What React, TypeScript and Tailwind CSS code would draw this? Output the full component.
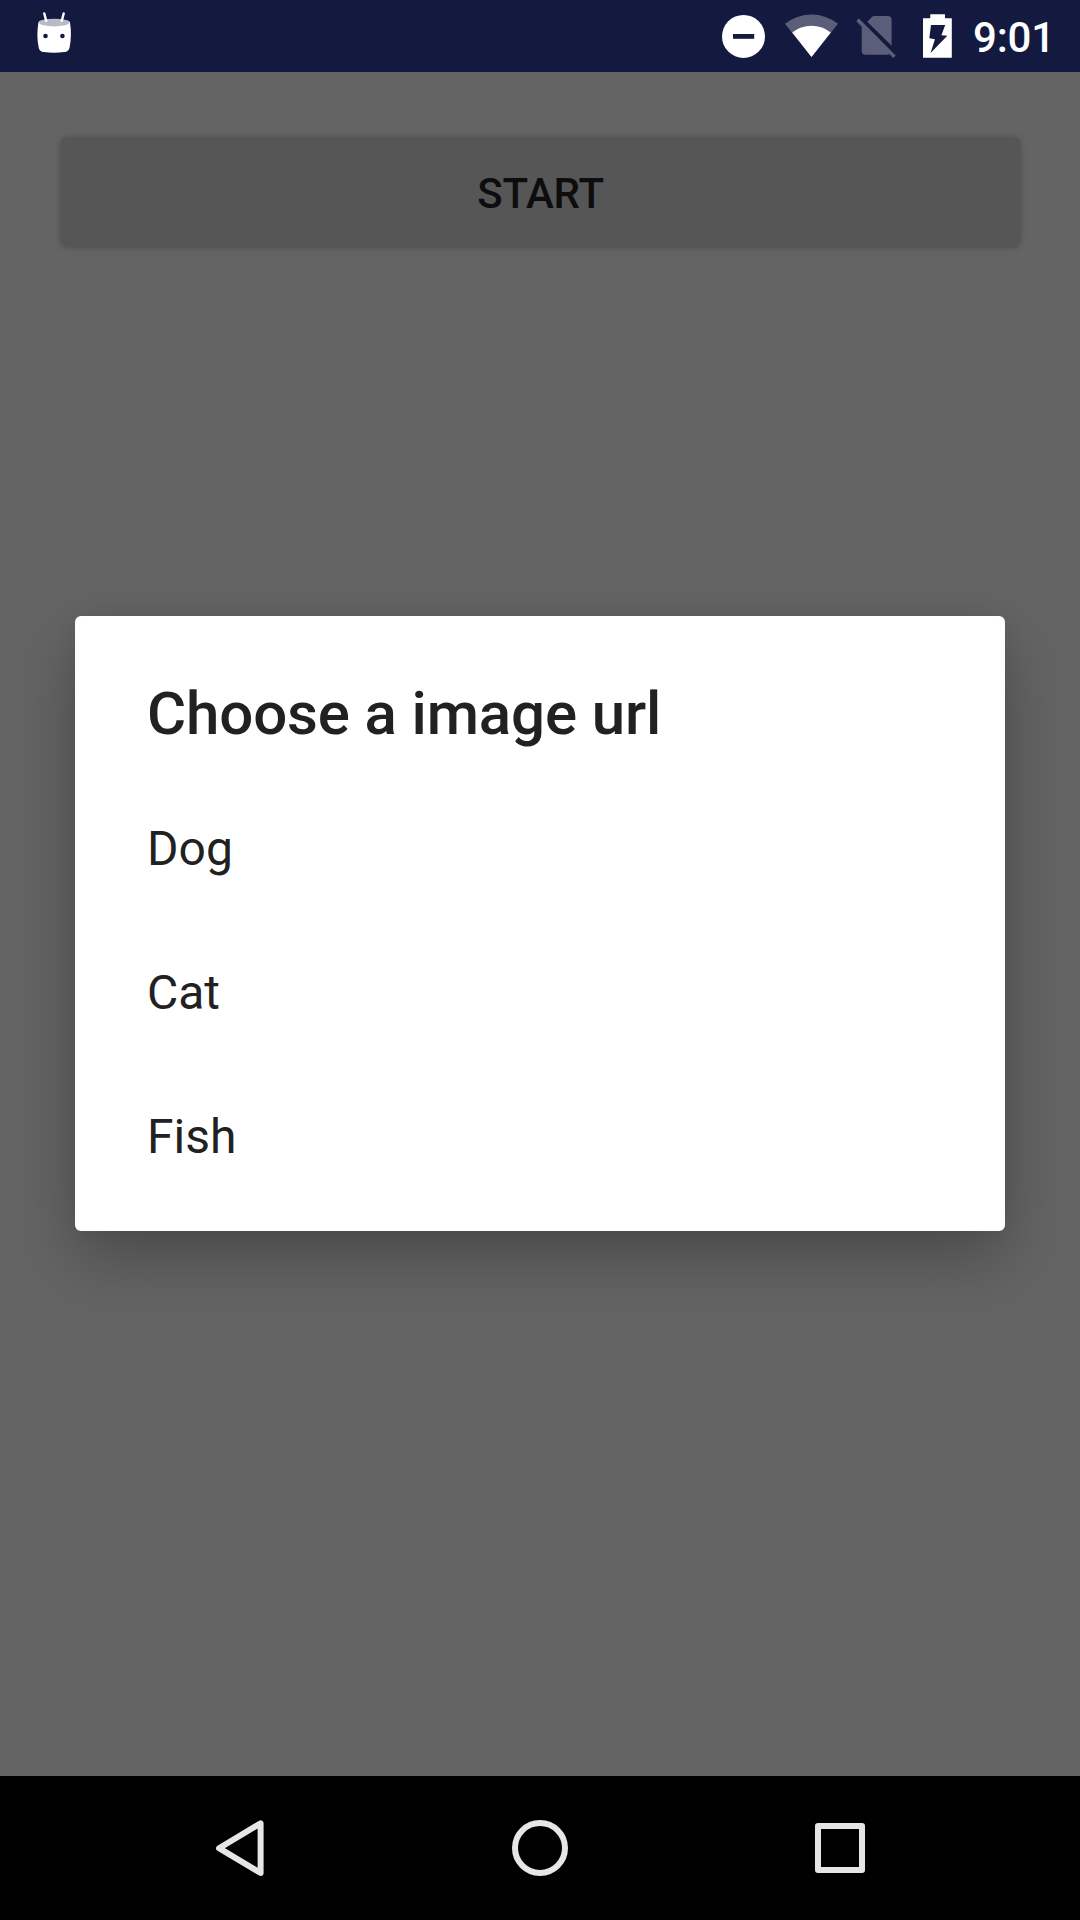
import React from "react";

const options = ["Dog", "Cat", "Fish"];

function DebugIcon() {
  return (
    <svg className="ml-[20px] h-[72px] w-[68px]" viewBox="20 0 68 72">
      <path
        d="M38.4 22.6C38.4 17.8 70 17.8 70 22.6C71.4 31 71.2 40 69.6 47.5C68.8 50.8 67.3 51.6 64 52.1C58 52.9 50 52.9 44 52.1C41 51.6 39.4 50.8 38.7 47.5C37 40 37 31 38.4 22.6Z"
        fill="#fff"
      />
      <ellipse cx="54.1" cy="22.6" rx="15.1" ry="3.9" fill="#b9bac6" />
      <path d="M44.3 13.5L46.2 20.8M63.7 13.5L61.8 20.8" stroke="#fff" strokeWidth="2.4" strokeLinecap="round" />
      <circle cx="45.5" cy="36" r="2.3" fill="#141940" />
      <circle cx="62.4" cy="36" r="2.3" fill="#141940" />
    </svg>
  );
}

function DoNotDisturbIcon() {
  return (
    <svg className="h-[72px] w-[48px]" viewBox="720 0 48 72">
      <circle cx="743.5" cy="36.4" r="21.5" fill="#fff" />
      <rect x="733" y="34" width="21.2" height="4.8" fill="#141940" />
    </svg>
  );
}

function WifiIcon() {
  return (
    <svg className="h-[72px] w-[72px]" viewBox="776 0 72 72">
      <path d="M785 23.7A43 43 0 0 1 838 23.7L811.5 57Z" fill="#fff" fillOpacity=".3" />
      <path d="M792.2 32.4A31.5 31.5 0 0 1 830.8 32.4L811.5 57Z" fill="#fff" />
    </svg>
  );
}

function NoSimIcon() {
  return (
    <svg className="h-[72px] w-[56px]" viewBox="848 0 56 72">
      <g fill="#fff" fillOpacity=".3">
        <path d="M867.3 21.7L872.2 16.8Q873 16 874 16H887.6Q891.6 16 891.6 20V45.8Z" />
        <path d="M858.9 18.4L895.7 55.4L893.2 58L889.3 54.1Q888.5 54.7 887.6 54.7H865.7Q861.7 54.7 861.7 50.7V26.7L856.3 21.1Z" />
      </g>
    </svg>
  );
}

function BatteryIcon() {
  return (
    <svg className="h-[72px] w-[48px]" viewBox="912 0 48 72">
      <path
        d="M930.3 14.3H945V18.2H951.8V57.8H923V18.2H930.3ZM931 25L929.3 38.3L934.9 39.2L930.6 53L947.3 35.8L941.4 35.2L945.2 25Z"
        fill="#fff"
        fillRule="evenodd"
      />
    </svg>
  );
}

function StatusBar() {
  return (
    <header className="flex h-[72px] shrink-0 items-center justify-between bg-[#141940]">
      <DebugIcon />
      <div className="flex items-center pr-[29px]">
        <DoNotDisturbIcon />
        <div className="w-2" />
        <WifiIcon />
        <NoSimIcon />
        <div className="w-2" />
        <BatteryIcon />
        <span className="w-[91px] pt-[2px] pl-[13px] text-[42px] leading-[49px] font-medium tracking-[-0.2px] whitespace-nowrap text-white">9:01</span>
      </div>
    </header>
  );
}

function ChoiceDialog() {
  return (
    <section className="mx-[75px] mt-[370px] h-[615px] rounded-[6px] bg-white pt-[63px] text-[#212121] shadow-[0_28px_64px_rgba(0,0,0,0.25),0_0_20px_rgba(0,0,0,0.05)]">
      <h1 className="px-[72px] text-[60px] leading-[70px] font-medium tracking-[-0.14px]">Choose a image url</h1>
      <ul className="mt-[28px]">
        {options.map((option) => (
          <li key={option} className="flex h-[144px] items-center px-[72px] text-[48px] leading-[56px]">
            {option}
          </li>
        ))}
      </ul>
    </section>
  );
}

function NavigationBar() {
  return (
    <nav className="flex h-[144px] shrink-0 items-center justify-center bg-black">
      <svg className="h-[144px] w-[300px]" viewBox="90 1776 300 144" fill="none" stroke="#e6e6e6" strokeWidth="6" strokeLinejoin="round">
        <path d="M219 1848.2L260.6 1823.3V1873Z" />
      </svg>
      <svg className="h-[144px] w-[300px]" viewBox="390 1776 300 144" fill="none" stroke="#e6e6e6" strokeWidth="6">
        <circle cx="540" cy="1848" r="25" />
      </svg>
      <svg className="h-[144px] w-[300px]" viewBox="690 1776 300 144" fill="none" stroke="#e6e6e6" strokeWidth="6" strokeLinejoin="round">
        <rect x="818" y="1826" width="44" height="44" />
      </svg>
    </nav>
  );
}

export default function App() {
  return (
    <div className="flex h-[1920px] w-[1080px] flex-col overflow-hidden bg-[#646464] font-['Roboto',sans-serif]">
      <StatusBar />
      <main className="flex grow flex-col overflow-hidden">
        <button className="mx-[60.5px] mt-[65px] flex h-[109px] shrink-0 items-center justify-center rounded-[6px] bg-[#565656] pt-[3px] pl-px text-[42px] leading-[49px] font-medium tracking-[-0.2px] text-[#0d0d0d] shadow-[0_1px_6px_rgba(0,0,0,0.26)]">
          START
        </button>
        <ChoiceDialog />
      </main>
      <NavigationBar />
    </div>
  );
}
